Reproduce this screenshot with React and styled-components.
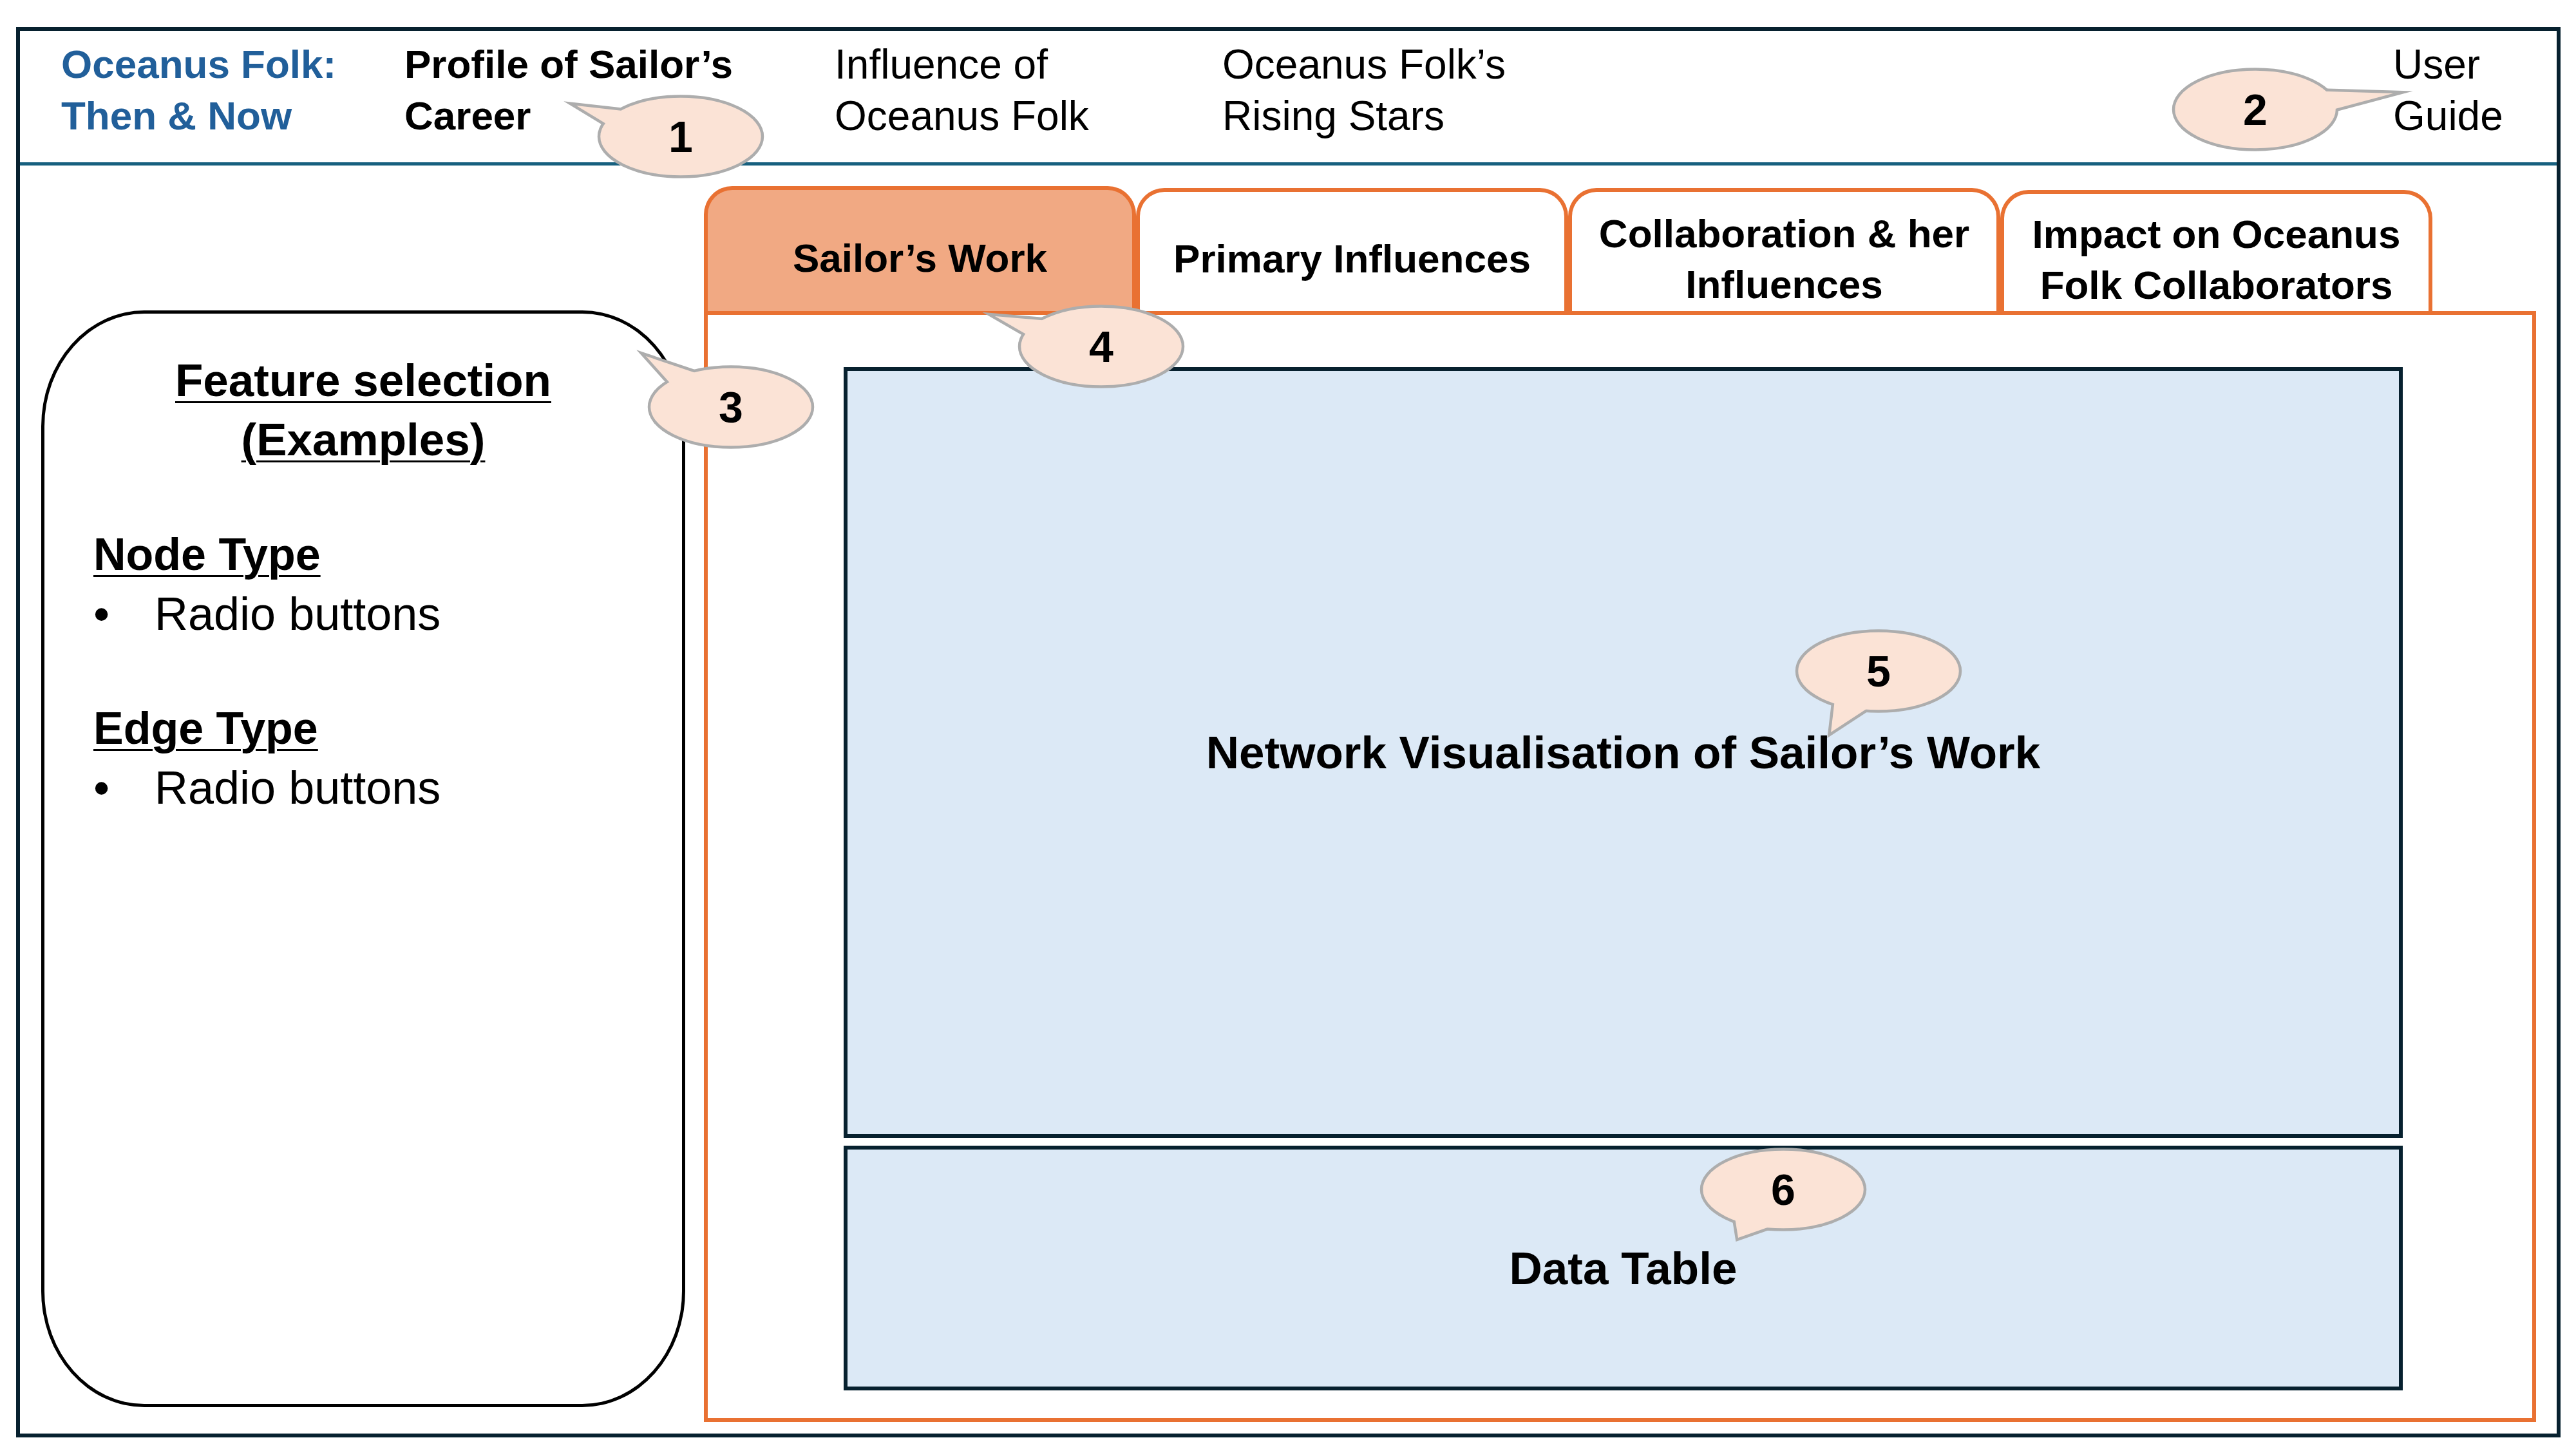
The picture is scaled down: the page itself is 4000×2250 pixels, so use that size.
import styled, { createGlobalStyle } from 'styled-components';

const GlobalStyle = createGlobalStyle`
  * { box-sizing: border-box; }
  html, body { margin: 0; padding: 0; background: #ffffff; }
  body { font-family: 'Liberation Sans', Arial, sans-serif; color: #000; }
`;

const c = {
  frame: '#07212f',
  divider: '#17607f',
  brand: '#215f9a',
  orange: '#e97132',
  orangeSoft: '#f1a983',
  blueFill: '#dce9f6',
  bubble: '#fbe3d6',
  bubbleLine: '#adadad',
};

const navItems = [
  { variant: 'brand', lines: ['Oceanus Folk:', 'Then & Now'] },
  { variant: 'bold', lines: ['Profile of Sailor’s', 'Career'] },
  { variant: 'plain', lines: ['Influence of', 'Oceanus Folk'] },
  { variant: 'plain', lines: ['Oceanus Folk’s', 'Rising Stars'] },
  { variant: 'plain', lines: ['User', 'Guide'] },
];

const tabs = [
  { label: ['Sailor’s Work'], h: 194, active: true },
  { label: ['Primary Influences'], h: 191 },
  { label: ['Collaboration & her', 'Influences'], h: 191 },
  { label: ['Impact on Oceanus', 'Folk Collaborators'], h: 188 },
];

const callouts = [
  { n: 1, cx: 1057, cy: 212, tip: [895, 164], base: [[966, 172], [941, 192]] },
  { n: 2, cx: 3502, cy: 170, tip: [3716, 145], base: [[3614, 142], [3630, 168]] },
  { n: 3, cx: 1135, cy: 632, tip: [1003, 553], base: [[1077, 578], [1038, 592]] },
  { n: 4, cx: 1710, cy: 538, tip: [1545, 491], base: [[1615, 497], [1590, 517]] },
  { n: 5, cx: 2917, cy: 1042, tip: [2843, 1137], base: [[2848, 1095], [2895, 1103]] },
  { n: 6, cx: 2769, cy: 1847, tip: [2699, 1922], base: [[2695, 1897], [2739, 1908]] },
];

const Callout = ({ n, cx, cy, tip, base }) => {
  const ox = cx - 130;
  const oy = cy - 65;
  // push the tail's base into the ellipse so the outline joins cleanly
  const pts = [tip, ...base.map(([x, y]) => [tip[0] + (x - tip[0]) * 1.6, tip[1] + (y - tip[1]) * 1.6])]
    .map(([x, y]) => `${x - ox},${y - oy}`)
    .join(' ');

  return (
    <Bubble $x={ox} $y={oy}>
      <svg width="260" height="130" viewBox="0 0 260 130" overflow="visible">
        <polygon points={pts} fill={c.bubble} stroke={c.bubbleLine} strokeWidth="9" strokeMiterlimit="12" />
        <ellipse cx="130" cy="65" rx="127" ry="62.5" fill={c.bubble} stroke={c.bubbleLine} strokeWidth="4.5" />
        <polygon points={pts} fill={c.bubble} />
      </svg>
      <BubbleNum>{n}</BubbleNum>
    </Bubble>
  );
};

const App = () => {
  return (
    <Page>
      <GlobalStyle />
      <Frame>
        <Header>
          {navItems.map((item) => (
            <NavItem key={item.lines[0]} $variant={item.variant}>
              {item.lines[0]}
              <br />
              {item.lines[1]}
            </NavItem>
          ))}
        </Header>

        <Body>
          <SidePanel>
            <PanelTitle>
              Feature selection
              <br />
              (Examples)
            </PanelTitle>

            <Section>
              <SectionHead>Node Type</SectionHead>
              <BulletRow>
                <Bullet>•</Bullet>
                Radio buttons
              </BulletRow>
            </Section>

            <Section>
              <SectionHead>Edge Type</SectionHead>
              <BulletRow>
                <Bullet>•</Bullet>
                Radio buttons
              </BulletRow>
            </Section>
          </SidePanel>

          <Main>
            <TabRow>
              {tabs.map((t) => (
                <Tab key={t.label[0]} $h={t.h} $active={t.active}>
                  <span>
                    {t.label.map((l, i) => (
                      <span key={l}>
                        {i > 0 && <br />}
                        {l}
                      </span>
                    ))}
                  </span>
                </Tab>
              ))}
            </TabRow>

            <Panel>
              <VizBox>Network Visualisation of Sailor’s Work</VizBox>
              <VizBox $h={380}>Data Table</VizBox>
            </Panel>
          </Main>
        </Body>
      </Frame>

      {callouts.map((co) => (
        <Callout key={co.n} {...co} />
      ))}
    </Page>
  );
};

export default App;

// Styles
const Page = styled.div`
  position: relative;
  width: 4000px;
  height: 2250px;
  padding: 42px 24px 18px 25px;
`;

const Frame = styled.div`
  width: 3951px;
  height: 2190px;
  border: 6px solid ${c.frame};
  display: flex;
  flex-direction: column;
`;

const Header = styled.header`
  height: 209px;
  flex-shrink: 0;
  display: grid;
  grid-template-columns: 533px 668px 602px 1fr 254px;
  align-items: start;
  padding: 12px 0 0 64px;
  border-bottom: 5px solid ${c.divider};
`;

const NavItem = styled.div`
  line-height: 80px;
  white-space: nowrap;
  font-size: ${({ $variant }) => ($variant === 'plain' ? '64px' : '62px')};
  font-weight: ${({ $variant }) => ($variant === 'plain' ? 400 : 700)};
  color: ${({ $variant }) => ($variant === 'brand' ? c.brand : '#000')};
`;

const Body = styled.div`
  flex: 1;
  display: flex;
  align-items: flex-start;
  gap: 29px;
  padding: 34px 32px 18px 33px;
`;

const SidePanel = styled.aside`
  width: 1000px;
  height: 1703px;
  flex-shrink: 0;
  margin-top: 191px;
  border: 5px solid #000;
  border-radius: 160px / 180px;
  padding-top: 58px;
`;

const PanelTitle = styled.div`
  text-align: center;
  font-size: 71px;
  font-weight: 700;
  line-height: 92px;
  text-decoration: underline;
  text-decoration-thickness: 3px;
  text-underline-offset: 8px;
`;

const Section = styled.div`
  margin-top: 86px;
  padding-left: 76px;
`;

const SectionHead = styled.div`
  font-size: 70px;
  font-weight: 700;
  line-height: 92px;
  text-decoration: underline;
  text-decoration-thickness: 3px;
  text-underline-offset: 8px;
`;

const BulletRow = styled.div`
  display: flex;
  font-size: 72px;
  line-height: 92px;
`;

const Bullet = styled.span`
  width: 95px;
  flex-shrink: 0;
`;

const Main = styled.div`
  width: 2845px;
  height: 100%;
  display: flex;
  flex-direction: column;
`;

const TabRow = styled.div`
  height: 192px;
  flex-shrink: 0;
  display: flex;
  align-items: flex-end;
`;

const Tab = styled.div`
  width: 671px;
  height: ${({ $h }) => $h}px;
  border: 6px solid ${c.orange};
  border-bottom: none;
  border-radius: 44px 44px 0 0;
  background: ${({ $active }) => ($active ? c.orangeSoft : '#fff')};
  display: flex;
  align-items: center;
  justify-content: center;
  text-align: center;
  padding-top: 22px;
  font-size: 62px;
  font-weight: 700;
  line-height: 79px;
`;

const Panel = styled.section`
  flex: 1;
  border: 6px solid ${c.orange};
  padding: 81px 201px 43px 211px;
  display: flex;
  flex-direction: column;
  gap: 12px;
`;

const VizBox = styled.div`
  flex: ${({ $h }) => ($h ? `0 0 ${$h}px` : '1')};
  border: 6px solid ${c.frame};
  background: ${c.blueFill};
  display: flex;
  align-items: center;
  justify-content: center;
  font-size: 71px;
  font-weight: 700;
`;

const Bubble = styled.div`
  position: absolute;
  left: ${({ $x }) => $x}px;
  top: ${({ $y }) => $y}px;
  width: 260px;
  height: 130px;
  pointer-events: none;

  svg {
    position: absolute;
    left: 0;
    top: 0;
  }
`;

const BubbleNum = styled.span`
  position: absolute;
  inset: 0;
  display: flex;
  align-items: center;
  justify-content: center;
  font-size: 68px;
  font-weight: 700;
  line-height: 1;
`;
